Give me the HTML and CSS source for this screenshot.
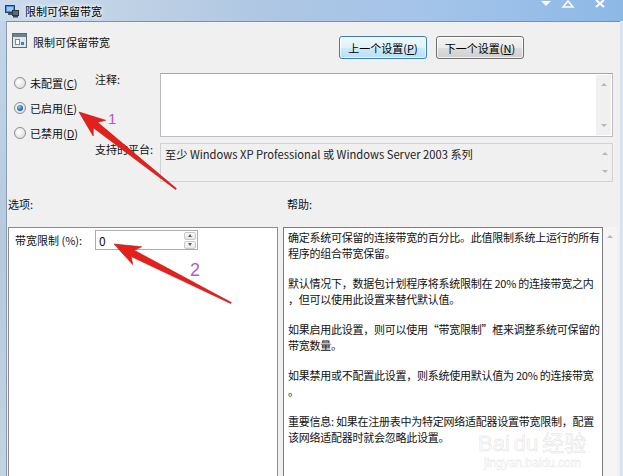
FILE: index.html
```html
<!DOCTYPE html>
<html lang="zh-CN">
<head>
    <meta charset="UTF-8">
    <title>限制可保留带宽</title>
    <link rel="stylesheet" href="styles.css">
</head>
<body>
    <div class="window">
        <div class="titlebar">
            <svg class="app-icon" width="16" height="16" viewBox="0 0 16 16">
                <rect x="1.5" y="2.5" width="9" height="7" fill="#4a8ad8" stroke="#1f4270"/>
                <rect x="3" y="4" width="6" height="4" fill="#9cc7f2"/>
                <rect x="4" y="10" width="4" height="2" fill="#4b5560"/>
                <rect x="8.5" y="7.5" width="6" height="5" fill="#5f6b78" stroke="#2d3640"/>
                <rect x="9" y="13" width="5" height="1.5" fill="#3b444e"/>
            </svg>
            <span class="title">限制可保留带宽</span>
            <svg class="caption" width="70" height="10" viewBox="0 0 70 10">
                <path d="M3 1 L13 1 L8 6 Z" fill="#ffffff" opacity="0.9"/>
                <path d="M25 7 L30 1 L35 7 Z" fill="none" stroke="#ffffff" stroke-width="1.6"/>
                <path d="M58 0 L66 7 M66 0 L58 7" stroke="#ffffff" stroke-width="2"/>
            </svg>
        </div>
        <div class="frame">
            <div class="frame-left"></div>
            <div class="client">
                <div class="header">
                    <svg class="policy-icon" width="15" height="15" viewBox="0 0 15 15">
                        <rect x="0.5" y="0.5" width="14" height="14" fill="#dfe6ec" stroke="#5d6b78"/>
                        <rect x="1" y="1" width="13" height="3" fill="#6e8094"/>
                        <rect x="3.5" y="6.5" width="4" height="5" fill="#ffffff" stroke="#7b8a98"/>
                        <rect x="9" y="9" width="3" height="3" fill="#4a7db5"/>
                    </svg>
                    <span class="policy-name">限制可保留带宽</span>
                    <div class="nav-buttons">
                        <button class="btn btn-focus">上一个设置(<u>P</u>)</button>
                        <button class="btn">下一个设置(<u>N</u>)</button>
                    </div>
                </div>

                <div class="state">
                    <div class="radios">
                        <div class="radio-row"><span class="radio"></span><span>未配置(<u>C</u>)</span></div>
                        <div class="radio-row"><span class="radio checked"></span><span>已启用(<u>E</u>)</span></div>
                        <div class="radio-row"><span class="radio"></span><span>已禁用(<u>D</u>)</span></div>
                    </div>
                    <div class="fields">
                        <div class="field-label">注释:</div>
                        <div class="box comment">
                            <div class="box-body"></div>
                            <div class="vscroll"><span class="tri-up"></span><span class="tri-down"></span></div>
                        </div>
                        <div class="field-label">支持的平台:</div>
                        <div class="box platform">
                            <div class="box-body">至少 Windows XP Professional 或 Windows Server 2003 系列</div>
                            <div class="vscroll"><span class="tri-up"></span><span class="tri-down"></span></div>
                        </div>
                    </div>
                </div>

                <div class="section-labels">
                    <span class="options-label">选项:</span>
                    <span>帮助:</span>
                </div>

                <div class="panels">
                    <div class="options-panel">
                        <div class="option-row">
                            <span class="option-label">带宽限制 (%):</span>
                            <div class="spin">
                                <span class="spin-value">0</span>
                                <div class="spin-btns">
                                    <span class="spin-btn"><span class="tri-up"></span></span>
                                    <span class="spin-btn"><span class="tri-down"></span></span>
                                </div>
                            </div>
                        </div>
                    </div>
                    <div class="help-panel">
                        <p>确定系统可保留的连接带宽的百分比。此值限制系统上运行的所有<br>程序的组合带宽保留。</p>
                        <p>默认情况下，数据包计划程序将系统限制在 20% 的连接带宽之内<br>，但可以使用此设置来替代默认值。</p>
                        <p>如果启用此设置，则可以使用“带宽限制”框来调整系统可保留的<br>带宽数量。</p>
                        <p>如果禁用或不配置此设置，则系统使用默认值为 20% 的连接带宽<br>。</p>
                        <p>重要信息: 如果在注册表中为特定网络适配器设置带宽限制，配置<br>该网络适配器时就会忽略此设置。</p>
                    </div>
                    <div class="help-scroll"><span class="tri-up"></span></div>
                </div>
            </div>
            <div class="frame-right"></div>
        </div>

        <div class="watermark">
            <div class="wm-logo">Bai<span class="wm-du">du</span>经验</div>
            <div class="wm-url">jingyan.baidu.com</div>
        </div>

        <svg class="marks" width="623" height="476" viewBox="0 0 623 476">
            <polygon points="79,112 105.6,120.3 97.6,122.3 176.4,188.5 175.6,189.5 93.3,127.8 93.2,136" fill="#e3201b" stroke="#b8140f" stroke-width="0.6"/>
            <polygon points="114,244 141.7,246.8 134.3,250.3 231.3,302.5 230.7,303.5 131.2,256.6 132.7,264.6" fill="#e3201b" stroke="#b8140f" stroke-width="0.6"/>
            <text x="108" y="124" class="mark-num">1</text>
            <text x="190" y="276" class="mark-num big">2</text>
        </svg>
    </div>
</body>
</html>
```

FILE: styles.css
```css
* {
    margin: 0;
    padding: 0;
    box-sizing: border-box;
}

body {
    width: 623px;
    height: 476px;
    overflow: hidden;
    font-family: "Noto Sans CJK SC", "Noto Sans", sans-serif;
    font-size: 11px;
    color: #111;
}

.window {
    position: relative;
    width: 623px;
    height: 476px;
    display: flex;
    flex-direction: column;
    background: #c9d8e9;
}

/* title bar */

.titlebar {
    height: 21px;
    flex: none;
    display: flex;
    align-items: center;
    padding-left: 4px;
    background: linear-gradient(to right, #cbdbec 0%, #bccfe4 25%, #adc6e3 45%, #a3c4ea 70%, #8db8e6 100%);
}

.app-icon {
    flex: none;
}

.title {
    margin-left: 5px;
    font-size: 11px;
    line-height: 14px;
    color: #000;
    text-shadow: 0 0 4px #fff, 0 0 6px #fff;
}

.caption {
    align-self: flex-start;
    margin-left: auto;
    margin-right: 15px;
}

.frame {
    flex: 1;
    display: flex;
    min-height: 0;
}

.frame-left {
    width: 6px;
    flex: none;
    background: linear-gradient(to bottom, #c2d4e8, #b6c9de 50%, #c4d3e3);
}

.frame-right {
    width: 3px;
    flex: none;
    background: #d9e4ef;
}

.client {
    width: 614px;
    flex: none;
    display: flex;
    flex-direction: column;
    overflow: hidden;
    background: #f0f0f0;
    border-top: 1px solid #7d8fa5;
    border-left: 1px solid #8c9cb0;
}

/* heading row */

.header {
    height: 51px;
    flex: none;
    display: flex;
    align-items: flex-start;
    padding-left: 5px;
}

.policy-icon {
    margin-top: 11px;
    flex: none;
}

.policy-name {
    margin-top: 13px;
    margin-left: 6px;
    line-height: 14px;
}

.nav-buttons {
    display: flex;
    gap: 9px;
    margin-top: 14px;
    margin-left: auto;
    margin-right: 96px;
}

.btn {
    width: 88px;
    height: 23px;
    font-family: inherit;
    font-size: 11px;
    color: #000;
    border: 1px solid #707070;
    border-radius: 3px;
    background: linear-gradient(#f2f2f2 0%, #ebebeb 50%, #dddddd 51%, #cfcfcf 100%);
    box-shadow: inset 0 0 0 1px rgba(255, 255, 255, 0.75);
}

.btn-focus {
    border-color: #3c7fb1;
    background: linear-gradient(#edf7fd 0%, #e0f2fc 50%, #cbeafc 51%, #b9e0f6 100%);
}

/* state radios + fields */

.state {
    height: 109px;
    flex: none;
    display: flex;
}

.radios {
    width: 88px;
    flex: none;
    display: flex;
    flex-direction: column;
    gap: 5px;
    padding-left: 7px;
}

.radio-row {
    height: 20px;
    display: flex;
    align-items: center;
    gap: 4px;
}

.radio {
    width: 12px;
    height: 12px;
    flex: none;
    border-radius: 50%;
    border: 1px solid #8e8f8f;
    background: radial-gradient(circle at 40% 40%, #ffffff, #e2e2e2 70%, #cfcfcf);
    display: flex;
    align-items: center;
    justify-content: center;
}

.radio.checked::after {
    content: "";
    width: 6px;
    height: 6px;
    border-radius: 50%;
    background: radial-gradient(circle at 40% 35%, #8ccbf5, #2a6bb0 60%, #15467c);
}

.fields {
    display: grid;
    grid-template-columns: 65px 453px;
    grid-template-rows: 64px 39px;
    row-gap: 6px;
}

.field-label {
    line-height: 12px;
}

.box {
    display: flex;
    border: 1px solid #b9bcc2;
    border-top-color: #a3a6ad;
}

.box-body {
    flex: 1;
}

.comment {
    background: #fff;
}

.platform {
    background: #f0f0f0;
    border-color: #cfd1d4;
}

.platform .box-body {
    padding: 3px 4px;
    font-size: 11.2px;
    line-height: 14px;
    color: #222;
}

.vscroll {
    width: 15px;
    flex: none;
    display: flex;
    flex-direction: column;
    align-items: center;
    justify-content: space-between;
    padding: 8px 0;
    background: #f0f0f0;
}

.comment .vscroll {
    margin: 1px 1px 1px 0;
}

.tri-up {
    width: 0;
    height: 0;
    border-left: 3px solid transparent;
    border-right: 3px solid transparent;
    border-bottom: 3px solid #b8b8b8;
}

.tri-down {
    width: 0;
    height: 0;
    border-left: 3px solid transparent;
    border-right: 3px solid transparent;
    border-top: 3px solid #b8b8b8;
}

/* options / help */

.section-labels {
    height: 14px;
    flex: none;
    display: flex;
    margin-top: 15px;
    line-height: 14px;
    padding-left: 1px;
}

.options-label {
    width: 279px;
}

.panels {
    height: 260px;
    flex: none;
    display: flex;
    margin-top: 16px;
    padding-left: 1px;
}

.options-panel {
    width: 270px;
    flex: none;
    background: #fff;
    border: 1px solid #8a8d92;
    padding: 2px 6px;
}

.option-row {
    display: flex;
    align-items: center;
}

.option-label {
    width: 80px;
    line-height: 20px;
}

.spin {
    width: 103px;
    height: 20px;
    display: flex;
    align-items: center;
    border: 1px solid #abadb3;
    background: #fff;
}

.spin-value {
    flex: 1;
    padding-left: 3px;
    font-size: 12px;
}

.spin-btns {
    display: flex;
    flex-direction: column;
    gap: 1px;
    margin-right: 1px;
}

.spin-btn {
    width: 12px;
    height: 8px;
    display: flex;
    align-items: center;
    justify-content: center;
    border: 1px solid #c9c9c9;
    border-radius: 2px;
    background: linear-gradient(#fafafa, #e6e6e6);
}

.spin-btn .tri-up,
.spin-btn .tri-down {
    border-left-width: 2px;
    border-right-width: 2px;
    border-bottom-color: #606060;
    border-top-color: #606060;
}

.help-panel {
    width: 320px;
    flex: none;
    margin-left: 5px;
    background: #fff;
    border: 1px solid #7a7c80;
    padding: 1px 4px;
    line-height: 16px;
    letter-spacing: -0.25px;
    white-space: nowrap;
    overflow: hidden;
}

.help-panel p {
    margin-bottom: 14px;
}

.help-scroll {
    width: 14px;
    flex: none;
    display: flex;
    justify-content: center;
    padding-top: 8px;
    background: #f5f5f5;
}

/* watermark + annotations */

.watermark {
    position: absolute;
    left: 478px;
    top: 431px;
    color: #fdfdfd;
    -webkit-text-stroke: 0.5px #e2e2e2;
    font-family: "Liberation Sans", "Noto Sans CJK SC", sans-serif;
}

.wm-logo {
    font-size: 22px;
    line-height: 25px;
}

.wm-du {
    margin: 0 4px;
}

.wm-url {
    margin-left: 6px;
    font-size: 12px;
    line-height: 15px;
    -webkit-text-stroke: 0.3px #e2e2e2;
}

.marks {
    position: absolute;
    left: 0;
    top: 0;
    pointer-events: none;
}

.mark-num {
    font-family: "Liberation Sans", sans-serif;
    font-size: 15px;
    fill: #c64bd0;
}

.mark-num.big {
    font-size: 18px;
    fill: #b45cc6;
}
```
